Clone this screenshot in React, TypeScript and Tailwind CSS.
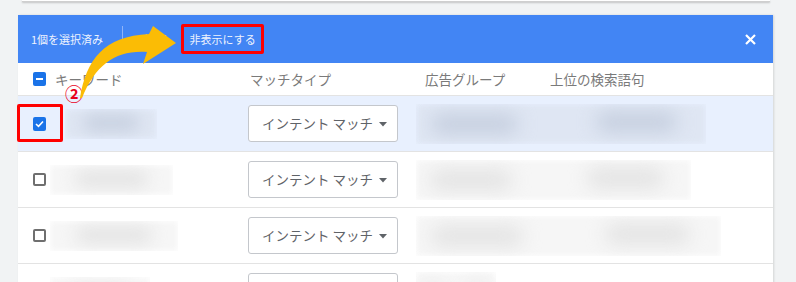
import React from 'react';

const jp = "font-['Noto_Sans_CJK_JP','Noto_Sans',sans-serif]";

const Blur = ({ className }: { className: string }) => <div className={`absolute rounded-full ${className}`} />;

const Unchecked = () => (
  <div className="w-[13px] h-[13px] rounded-[2px] border-2 border-[#6f6f6f] bg-white shrink-0" />
);

const MatchSelect = () => (
  <div className={`w-[150px] h-[37px] rounded-[3px] border border-[#c4c7cc] bg-white flex items-center pl-[13px] gap-[6px] text-[13.5px] text-[#5f6368] ${jp}`}>
    <span>インテント マッチ</span>
    <svg width="8" height="5" viewBox="0 0 8 5" className="mt-[1px]">
      <path d="M0 0 L8 0 L4 4.5 Z" fill="#5f6368" />
    </svg>
  </div>
);

interface RowProps {
  selected?: boolean;
  kw: string;
  right: string;
  tone: string;
  dark: string;
}

const Row: React.FC<RowProps> = ({ selected, kw, right, tone, dark }) => (
  <div className={`relative h-[56px] border-b border-[#e3e3e3] grid grid-cols-[215px_168px_1fr] items-center pl-[15px] ${selected ? 'bg-[#e8f0fe]' : 'bg-white'}`}>
    <div className="flex items-center gap-[4px]">
      {selected ? (
        <div className="w-[13px] h-[14px] rounded-[2px] bg-[#1a73e8] flex items-center justify-center shrink-0">
          <svg width="9" height="8" viewBox="0 0 9 8">
            <path d="M1 4 L3.5 6.3 L8 1.5" stroke="white" strokeWidth="1.6" fill="none" />
          </svg>
        </div>
      ) : (
        <Unchecked />
      )}
      <div className={`relative h-[30px] overflow-hidden ${kw}`}>
        <div className={`absolute inset-0 ${tone}`} />
        <Blur className={`left-[20%] top-[6px] w-[60%] h-[16px] blur-[8px] ${dark}`} />
      </div>
    </div>
    <MatchSelect />
    <div className={`relative h-[40px] overflow-hidden ${right}`}>
      <div className={`absolute inset-0 ${tone}`} />
      <Blur className={`left-[5%] top-[10px] w-[30%] h-[20px] blur-[9px] ${dark}`} />
      <Blur className={`left-[62%] top-[8px] w-[28%] h-[20px] blur-[9px] ${dark}`} />
    </div>
  </div>
);

export default function App() {
  return (
    <div className="relative w-[796px] h-[282px] bg-[#f1f3f4] overflow-hidden">
      <div className="ml-[22px] w-[748px] h-[2px] bg-white border-b border-[#cfcfcf] shadow-[0_1px_2px_rgba(0,0,0,0.2)]" />

      <div className="mt-[13px] ml-[18px] w-[755px] bg-white shadow-[1px_0_2px_rgba(0,0,0,0.12)]">
        {/* selection bar */}
        <div className={`h-[48px] bg-[#4285f4] flex items-center pl-[13px] pr-[17px] text-[11px] text-[#eef3fe] ${jp}`}>
          <span>1個を選択済み</span>
          <div className="w-px h-[26px] bg-[#8fb4f8] ml-[19px]" />
          <span className="ml-[22px]">適用</span>
          <div className="ml-[14px] w-[83px] h-[30px] border-[3px] border-[#ff0000] rounded-[2px] flex items-center justify-center">
            非表示にする
          </div>
          <svg width="11" height="11" viewBox="0 0 11 11" className="ml-auto">
            <path d="M1 1 L10 10 M10 1 L1 10" stroke="white" strokeWidth="2.2" />
          </svg>
        </div>

        {/* column header */}
        <div className={`h-[33px] border-b border-[#e3e3e3] grid grid-cols-[217px_175px_125px_1fr] items-center pl-[15px] text-[13.5px] text-[#7a7a7a] ${jp}`}>
          <div className="flex items-center gap-[9px]">
            <div className="w-[13px] h-[14px] rounded-[2px] bg-[#1a73e8] flex items-center justify-center">
              <div className="w-[7px] h-[2px] bg-white" />
            </div>
            <span>キーワード</span>
          </div>
          <span>マッチタイプ</span>
          <span>広告グループ</span>
          <span>上位の検索語句</span>
        </div>

        <Row selected kw="w-[92px] ml-[15px]" right="w-[290px]" tone="bg-[#dfe6f3] blur-[3px]" dark="bg-[#c6cfdf]" />
        <Row kw="w-[123px]" right="w-[275px]" tone="bg-[#f6f6f6] blur-[3px]" dark="bg-[#e3e3e3]" />
        <Row kw="w-[128px]" right="w-[305px]" tone="bg-[#f6f6f6] blur-[3px]" dark="bg-[#e3e3e3]" />
        <Row kw="w-[100px]" right="w-[80px]" tone="bg-[#f7f7f7] blur-[3px]" dark="bg-[#ebebeb]" />
      </div>

      {/* annotations */}
      <div className="absolute left-[17px] top-[104px] w-[46px] h-[38px] border-[3px] border-[#ff0000] rounded-[2px]" />
      <div className={`absolute left-[65px] top-[84px] text-[18px] leading-none font-bold text-[#e8001c] ${jp}`}>②</div>
      <svg className="absolute left-0 top-0 pointer-events-none" width="796" height="282" viewBox="0 0 796 282">
        <path
          d="M80 98 C86 60 104 36 149 34 L153 26 L176 43 L143 64 L147 52 C116 50 96 64 82 98 Z"
          fill="#fbbc05"
        />
      </svg>
    </div>
  );
}
